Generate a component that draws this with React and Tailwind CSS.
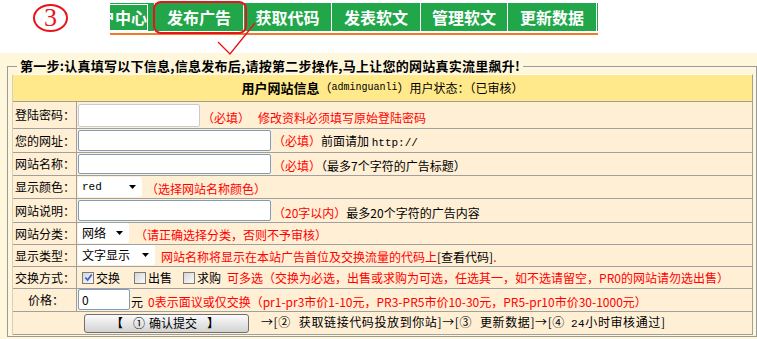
import React from "react";

const LINE = "border-[#a0a0a0]";

function Row({ label, h, labelClass = "pl-[2px]", valueClass = "items-end pb-[1px]", children }) {
  return (
    <div className={"flex border-b " + LINE + " " + h}>
      <div className={"w-[64px] shrink-0 border-r " + LINE + " flex items-center leading-[16px] " + labelClass}>
        {label}
      </div>
      <div className={"flex-1 flex pl-[1px] " + valueClass}>{children}</div>
    </div>
  );
}

function TextBox({ w, h, value = "", border = "border-[#7f9db9]" }) {
  return (
    <input
      readOnly
      value={value}
      className={
        w + " " + h + " " + border + " shrink-0 border bg-white rounded-[2px] px-[3px] text-[12px] leading-[16px] outline-none"
      }
    />
  );
}

function Select({ w, mono, children }) {
  return (
    <div className={w + " h-[20px] shrink-0 bg-white rounded-[2px] flex items-center justify-between pl-[4px] pr-[6px]"}>
      <span className={mono ? "font-['Liberation_Mono',monospace] text-[11px] leading-[14px]" : "leading-[16px]"}>
        {children}
      </span>
      <svg width="7" height="4" viewBox="0 0 7 4">
        <path d="M0 0h7L3.5 4z" fill="#000" />
      </svg>
    </div>
  );
}

function Check({ checked }) {
  return (
    <span className="w-[12px] h-[12px] shrink-0 border border-[#7b7b7b] bg-linear-to-br from-[#d6d6d6] to-[#fbfbfb] flex items-center justify-center">
      {checked && (
        <svg width="9" height="9" viewBox="0 0 10 10">
          <path d="M1.5 5L4 7.8L8.6 1.6" stroke="#3c66c8" strokeWidth="2" fill="none" />
        </svg>
      )}
    </span>
  );
}

const mono = "font-['Liberation_Mono',monospace] text-[11px]";

export default function App() {
  return (
    <div className="relative w-[757px] h-[339px] overflow-hidden bg-[#fff7dc] font-['Noto_Sans_CJK_SC',sans-serif] text-[12px] text-black">
      {/* top: step marker + nav */}
      <div className="h-[53px] bg-white flex items-start">
        <div className="w-[110px] shrink-0 pl-[33px] pt-[4px]">
          <div className="w-[35px] h-[28px] rounded-[50%] border-2 border-[#e8141c] flex items-center justify-center text-[#e8141c] font-['Liberation_Serif',serif] text-[26px] leading-[24px]">
            3
          </div>
        </div>
        <div className="mt-[3px] w-[488px]">
          <div className="h-[28px] bg-[#22a64a] flex overflow-hidden text-white font-bold text-[16px] leading-[28px]">
            <div className="w-[44px] shrink-0 flex justify-end items-center overflow-hidden pr-[6px]">
              <span className="shrink-0 border border-white h-[27px] leading-[25px] whitespace-nowrap">户中心</span>
            </div>
            <div className="w-[89px] shrink-0 text-center border-l border-white">发布广告</div>
            <div className="w-[88px] shrink-0 text-center border-l border-white">获取代码</div>
            <div className="w-[89px] shrink-0 text-center border-l border-white">发表软文</div>
            <div className="w-[87px] shrink-0 text-center border-l border-white">管理软文</div>
            <div className="w-[89px] shrink-0 text-center border-l border-white">更新数据</div>
            <div className="w-[2px] shrink-0 border-l border-white" />
          </div>
          <div className="mt-[2px] h-[2px] bg-[#f07a2a]" />
        </div>
      </div>

      {/* annotation: red outline + tick */}
      <div className="absolute left-[153px] top-[1px] w-[94px] h-[33px] border-2 border-[#e8141c] rounded-[8px]" />
      <svg className="absolute left-0 top-0 pointer-events-none" width="757" height="60" viewBox="0 0 757 60">
        <polyline points="218,42 230,54 255,23" fill="none" stroke="#e8141c" strokeWidth="1.4" />
      </svg>

      {/* form */}
      <div className="pt-[6px]">
        <fieldset className="ml-[7px] w-[750px] border border-[#9a9a9a] pl-[4px] pr-[3px] pb-[1px]">
          <legend className="ml-[5px] px-[3px] font-bold text-[13px] leading-[14px] tracking-[0.25px]">
            第一步:认真填写以下信息,信息发布后,请按第二步操作,马上让您的网站真实流里飙升!
          </legend>
          <div className="w-[741px] mt-[1px] border-t border-t-[#fffcee] border-r border-r-[#a0a0a0] border-l border-l-[#d9cfbd] bg-[#ffefd5]">
            <div className={"h-[27px] bg-[#ffe98a] border-b " + LINE + " flex items-center justify-center leading-[16px]"}>
              <b className="text-[13px]">用户网站信息</b>
              <span>（</span>
              <span className="font-['Liberation_Mono',monospace] text-[10px]">adminguanli</span>
              <span>）用户状态：（已审核）</span>
            </div>

            <Row label="登陆密码：" h="h-[27px]">
              <TextBox w="w-[122px]" h="h-[23px]" border="border-[#c8ccd2]" />
              <span className="ml-[2px] mb-[1px] leading-[16px] text-[#ff0000] whitespace-nowrap">
                （必填）<span className="ml-[8px]">修改资料必须填写原始登陆密码</span>
              </span>
            </Row>

            <Row label="您的网址：" h="h-[24px]">
              <TextBox w="w-[193px]" h="h-[21px]" />
              <span className="ml-[2px] leading-[16px] whitespace-nowrap">
                <span className="text-[#ff0000]">（必填）</span>前面请加 <span className={mono}>http://</span>
              </span>
            </Row>

            <Row label="网站名称：" h="h-[23px]">
              <TextBox w="w-[193px]" h="h-[20px]" />
              <span className="ml-[2px] leading-[16px] whitespace-nowrap">
                <span className="text-[#ff0000]">（必填）</span>（最多7个字符的广告标题）
              </span>
            </Row>

            <Row label="显示颜色：" h="h-[23px]">
              <Select w="w-[64px]" mono>
                red
              </Select>
              <span className="ml-[4px] leading-[16px] text-[#ff0000] whitespace-nowrap">（选择网站名称颜色）</span>
            </Row>

            <Row label="网站说明：" h="h-[24px]">
              <TextBox w="w-[193px]" h="h-[21px]" />
              <span className="ml-[2px] leading-[16px] whitespace-nowrap">
                <span className="text-[#ff0000]">（20字以内）</span>最多20个字符的广告内容
              </span>
            </Row>

            <Row label="网站分类：" h="h-[22px]">
              <Select w="w-[51px]">网络</Select>
              <span className="ml-[6px] leading-[16px] text-[#ff0000] whitespace-nowrap">（请正确选择分类，否则不予审核）</span>
            </Row>

            <Row label="显示类型：" h="h-[22px]">
              <Select w="w-[77px]">文字显示</Select>
              <span className="ml-[6px] leading-[16px] whitespace-nowrap">
                <span className="text-[#ff0000]">网站名称将显示在本站广告首位及交换流量的代码上</span>[查看代码]
                <span className="text-[#ff0000]">.</span>
              </span>
            </Row>

            <Row label="交换方式：" h="h-[22px]" valueClass="items-center">
              <span className="ml-[4px]">
                <Check checked />
              </span>
              <span className="ml-[2px] leading-[16px]">交换</span>
              <span className="ml-[14px]">
                <Check />
              </span>
              <span className="ml-[2px] leading-[16px]">出售</span>
              <span className="ml-[11px]">
                <Check />
              </span>
              <span className="ml-[2px] leading-[16px]">求购</span>
              <span className="ml-[6px] leading-[16px] text-[#ff0000] whitespace-nowrap">
                可多选（交换为必选，出售或求购为可选，任选其一，如不选请留空，PR0的网站请勿选出售）
              </span>
            </Row>

            <Row label="价格：" h="h-[23px]" labelClass="pl-[15px]">
              <TextBox w="w-[52px]" h="h-[21px]" value="0" />
              <span className="ml-[1px] leading-[16px]">元</span>
              <span className="ml-[5px] leading-[16px] text-[#ff0000] whitespace-nowrap">
                0表示面议或仅交换（pr1-pr3市价1-10元，PR3-PR5市价10-30元，PR5-pr10市价30-1000元）
              </span>
            </Row>

            <div className="h-[23px] flex items-center border-b border-[#a0a0a0]">
              <button className="ml-[71px] w-[165px] h-[19px] shrink-0 border border-[#707070] rounded-[3px] bg-linear-to-b from-[#fbfbfb] to-[#d2d2d2] text-[12px] leading-[16px] flex items-center justify-start pl-[26px]">
                <b>【</b>
                <span className="ml-[10px]">①</span>
                <span className="ml-[4px]">确认提交</span>
                <b className="ml-[10px]">】</b>
              </button>
              <span className="ml-[12px] leading-[16px] whitespace-nowrap tracking-[0.6px]">
                →[②<span className="ml-[8px]">获取链接代码投放到你站]</span>→[③<span className="ml-[8px]">更新数据]</span>→[④
                <span className={"ml-[6px] " + mono}>24</span>小时审核通过]
              </span>
            </div>
          </div>
        </fieldset>
      </div>
    </div>
  );
}
